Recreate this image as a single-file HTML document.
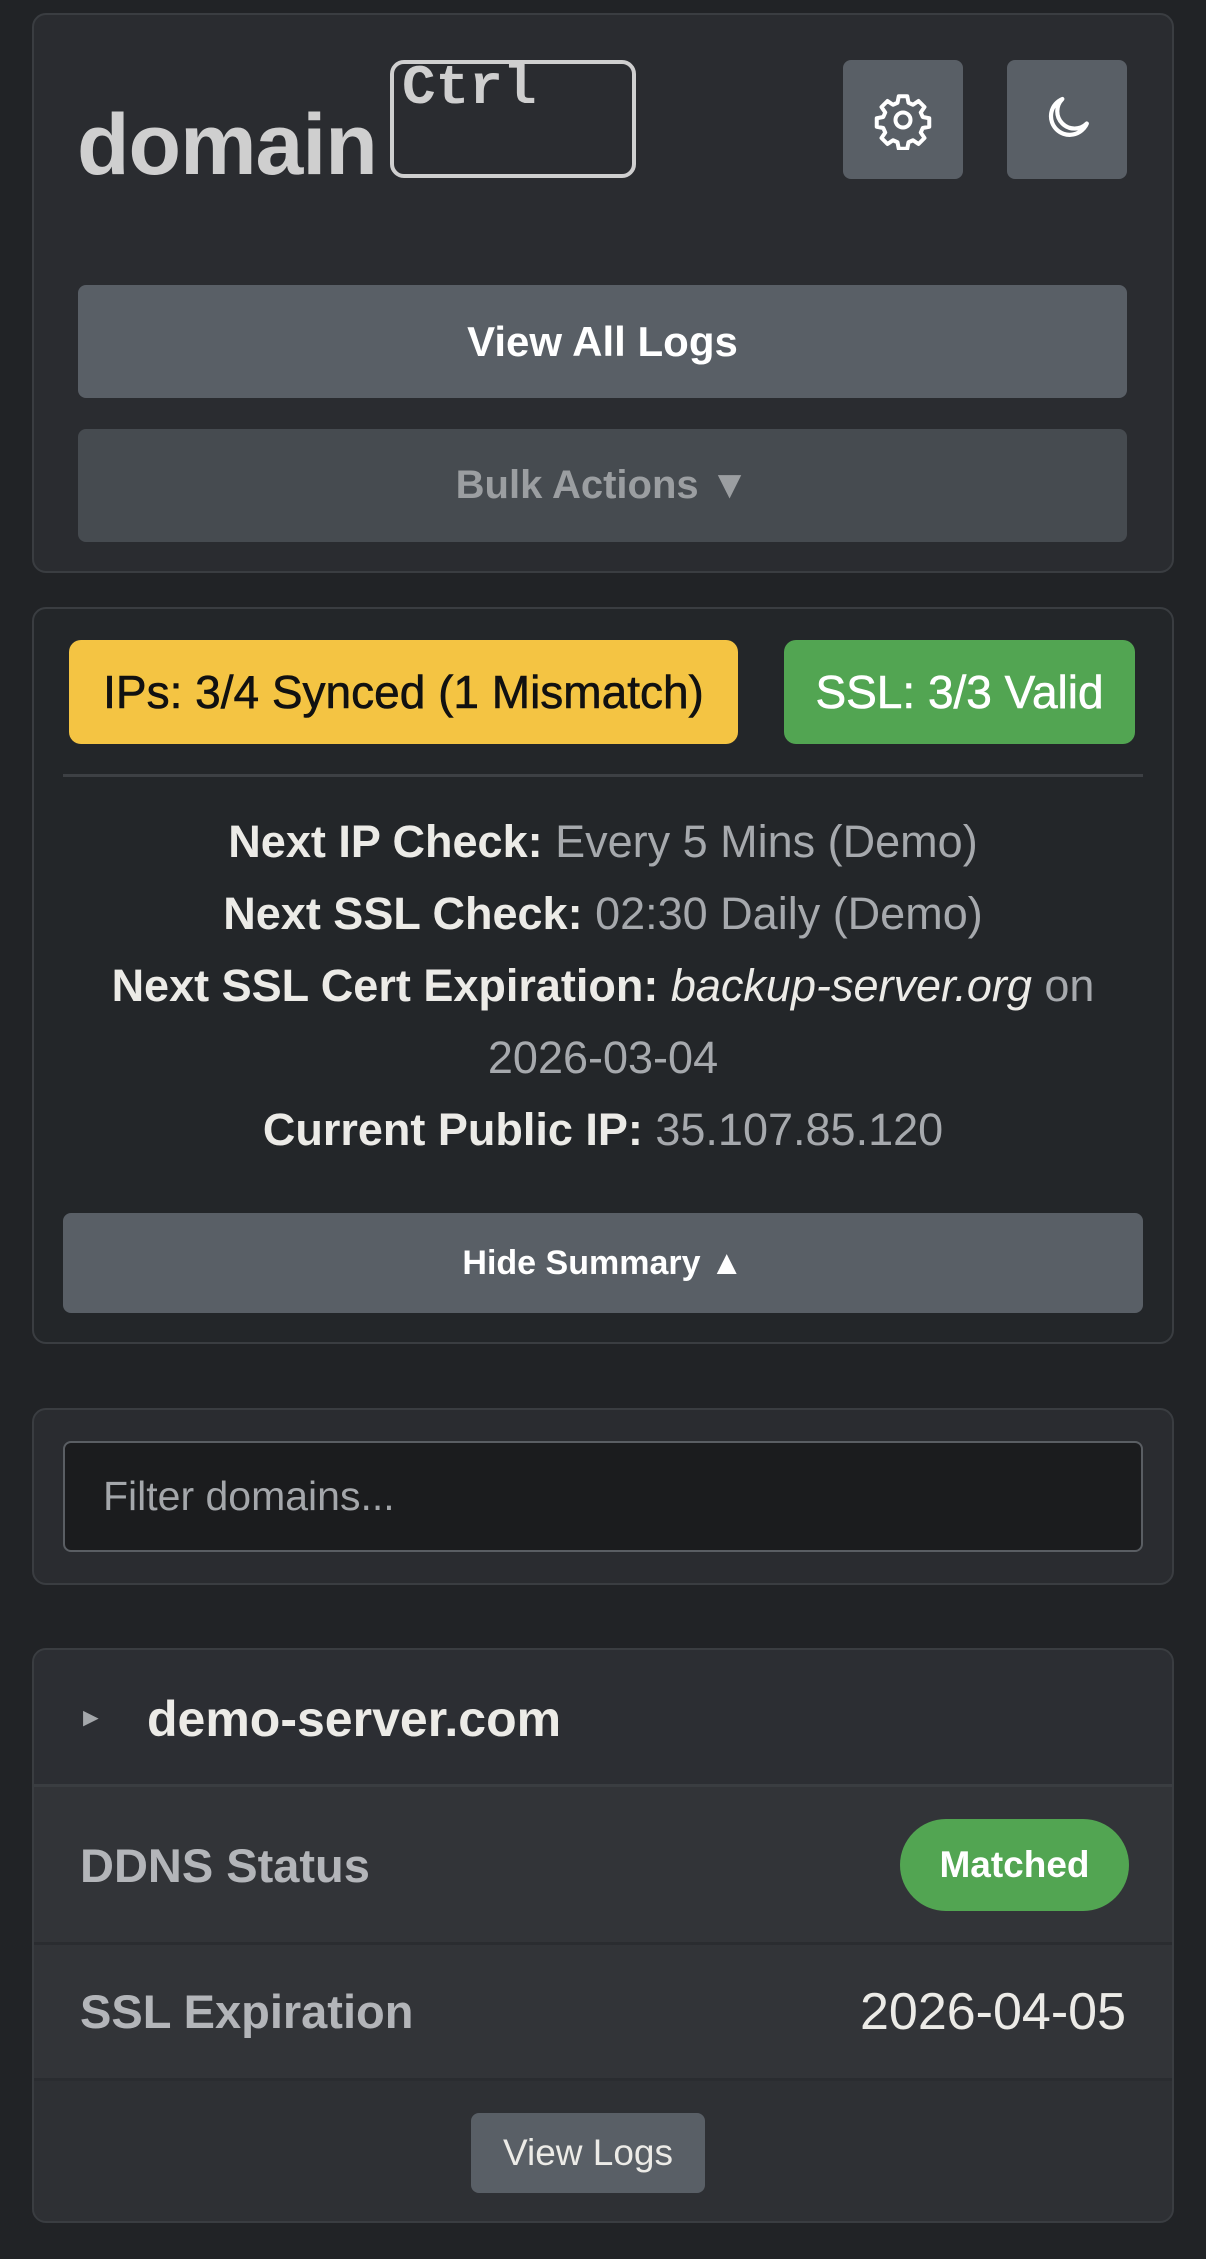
<!DOCTYPE html>
<html><head><meta charset="utf-8"><style>
*{box-sizing:border-box;margin:0;padding:0}
body{width:1206px;height:2259px;background:#212326;font-family:"Liberation Sans",sans-serif;color:#e9e9e6;position:relative;overflow:hidden}
.abs{position:absolute}
.card{position:absolute;left:32px;width:1142px;border:2px solid #3a3d41;border-radius:14px}
.btn{position:absolute;border-radius:8px;display:flex;align-items:center;justify-content:center;font-weight:bold}
.line{position:absolute;left:-40px;width:1160px;text-align:center;font-size:45px;color:#a6a9ad;white-space:nowrap}
.line b{color:#ecebe7}
</style></head><body>
<div class="card" style="top:13px;height:560px;background:#2a2c30"></div>
<div class="abs" style="left:77px;top:96px;font-size:86px;font-weight:bold;color:#cfcfcf;letter-spacing:-1px">domain</div>
<div class="abs" style="left:390px;top:60px;width:246px;height:118px;border:4px solid #cfcfcf;border-radius:14px"></div>
<div class="abs" style="left:402px;top:56px;font-family:'Liberation Mono',monospace;font-size:56px;font-weight:bold;color:#cfcfcf">Ctrl</div>
<div class="btn" style="left:843px;top:60px;width:120px;height:119px;background:#595f66">
<svg width="60" height="60" viewBox="0 0 24 24" fill="none" stroke="#fff" stroke-width="1.6" stroke-linejoin="round"><path d="M10.3 2.5h3.4l.5 2.6 1.8.8 2.2-1.5 2.4 2.4-1.5 2.2.8 1.8 2.6.5v3.4l-2.6.5-.8 1.8 1.5 2.2-2.4 2.4-2.2-1.5-1.8.8-.5 2.6h-3.4l-.5-2.6-1.8-.8-2.2 1.5-2.4-2.4 1.5-2.2-.8-1.8-2.6-.5v-3.4l2.6-.5.8-1.8-1.5-2.2 2.4-2.4 2.2 1.5 1.8-.8z"/><circle cx="12" cy="12" r="3"/></svg></div>
<div class="btn" style="left:1007px;top:60px;width:120px;height:119px;background:#595f66">
<svg width="56" height="56" viewBox="0 0 24 24" fill="none" stroke="#fff" stroke-width="1.8" stroke-linejoin="round"><path d="M10 3a8 8 0 1 0 10.5 10.5A7 7 0 0 1 10 3z"/></svg></div>
<div class="btn" style="left:78px;top:285px;width:1049px;height:113px;background:#595f66;color:#fff;font-size:42px">View All Logs</div>
<div class="btn" style="left:78px;top:429px;width:1049px;height:113px;background:#464b50;color:#9b9ea1;font-size:40px">Bulk Actions ▼</div>

<div class="card" style="top:607px;height:737px;background:#232629"></div>
<div class="btn" style="left:69px;top:640px;width:669px;height:104px;border-radius:12px;background:#f4c443;color:#111;font-weight:normal;font-size:46px;-webkit-text-stroke:0.6px #111">IPs: 3/4 Synced (1 Mismatch)</div>
<div class="btn" style="left:784px;top:640px;width:351px;height:104px;border-radius:12px;background:#52a552;color:#fff;font-weight:normal;font-size:46px;-webkit-text-stroke:0.6px #fff">SSL: 3/3 Valid</div>
<div class="abs" style="left:63px;top:774px;width:1080px;height:3px;background:#3d4044"></div>
<div class="abs" style="left:63px;top:806px;width:1080px;height:370px">
<div class="line" style="top:0;line-height:72px"><b>Next IP Check:</b> Every 5 Mins (Demo)</div>
<div class="line" style="top:72px;line-height:72px"><b>Next SSL Check:</b> 02:30 Daily (Demo)</div>
<div class="line" style="top:144px;line-height:72px"><b>Next SSL Cert Expiration:</b> <i style="color:#ecebe7">backup-server.org</i> on</div>
<div class="line" style="top:216px;line-height:72px">2026-03-04</div>
<div class="line" style="top:288px;line-height:72px"><b>Current Public IP:</b> 35.107.85.120</div>
</div>
<div class="btn" style="left:63px;top:1213px;width:1080px;height:100px;background:#595f66;color:#fff;font-size:34px">Hide Summary ▲</div>

<div class="card" style="top:1408px;height:177px;background:#2a2c30"></div>
<div class="abs" style="left:63px;top:1441px;width:1080px;height:111px;background:#1b1c1e;border:2px solid #5a5e63;border-radius:8px;font-size:41px;color:#a4a7ab;padding-left:38px;line-height:107px">Filter domains...</div>

<div class="card" style="top:1648px;height:575px;background:#323438;overflow:hidden">
<div class="abs" style="left:0;top:0;width:100%;height:137px;background:#2c2e33;border-bottom:3px solid #3a3d41"></div>
<div class="abs" style="left:44px;top:52px;font-size:26px;color:#a4a7ab">►</div>
<div class="abs" style="left:113px;top:40px;font-size:50px;font-weight:bold;color:#ecebe7">demo-server.com</div>
<div class="abs" style="left:0;top:292px;width:100%;height:3px;background:#2a2c30"></div>
<div class="abs" style="left:46px;top:188px;font-size:47px;font-weight:bold;color:#b3b5b9">DDNS Status</div>
<div class="btn" style="left:866px;top:169px;width:229px;height:92px;border-radius:46px;background:#52a552;color:#fff;font-size:37px">Matched</div>
<div class="abs" style="left:0;top:428px;width:100%;height:3px;background:#2a2c30"></div>
<div class="abs" style="left:46px;top:334px;font-size:47px;font-weight:bold;color:#b3b5b9">SSL Expiration</div>
<div class="abs" style="right:46px;top:332px;font-size:52px;color:#ecebe7">2026-04-05</div>
<div class="abs" style="left:0;top:431px;width:100%;height:150px;background:#2e3034"></div>
<div class="btn" style="left:437px;top:463px;width:234px;height:80px;background:#595f66;color:#ecebe7;font-weight:normal;font-size:37px">View Logs</div>
</div>
</body></html>
